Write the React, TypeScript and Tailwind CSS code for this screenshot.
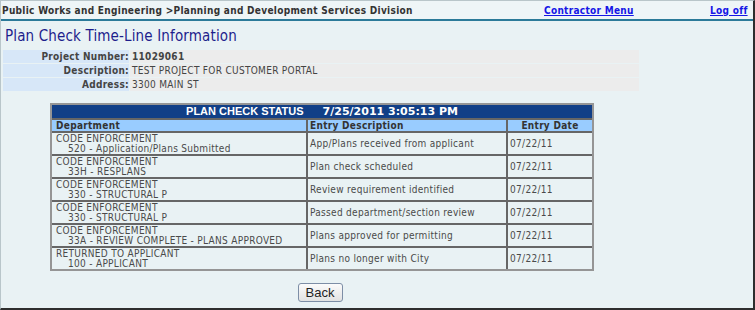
import React from 'react';

const rows = [
  { dept: 'CODE ENFORCEMENT', sub: '520 - Application/Plans Submitted', desc: 'App/Plans received from applicant', date: '07/22/11' },
  { dept: 'CODE ENFORCEMENT', sub: '33H - RESPLANS', desc: 'Plan check scheduled', date: '07/22/11' },
  { dept: 'CODE ENFORCEMENT', sub: '330 - STRUCTURAL P', desc: 'Review requirement identified', date: '07/22/11' },
  { dept: 'CODE ENFORCEMENT', sub: '330 - STRUCTURAL P', desc: 'Passed department/section review', date: '07/22/11' },
  { dept: 'CODE ENFORCEMENT', sub: '33A - REVIEW COMPLETE - PLANS APPROVED', desc: 'Plans approved for permitting', date: '07/22/11' },
  { dept: 'RETURNED TO APPLICANT', sub: '100 - APPLICANT', desc: 'Plans no longer with City', date: '07/22/11' },
];

const info = [
  { label: 'Project Number:', value: '11029061', bold: true },
  { label: 'Description:', value: 'TEST PROJECT FOR CUSTOMER PORTAL', bold: false },
  { label: 'Address:', value: '3300 MAIN ST', bold: false },
];

export default function App() {
  return (
    <div className="w-[755px] h-[310px] overflow-hidden bg-[#e9f2f4] border-t border-l border-[#b9c6ca] border-r-2 border-b-2 border-r-[#2e2e2e] border-b-[#2e2e2e] font-['DejaVu_Sans_Condensed','DejaVu_Sans',sans-serif] font-stretch-condensed text-[10px] tracking-[0.3px] text-[#4a4a4a]">
      {/* Top bar */}
      <div className="flex h-[20px] items-center border-b-2 border-[#2b7a99] bg-[#eef5f7] font-bold text-[#333]">
        <div className="w-[543px] pl-[1px] whitespace-nowrap">
          Public Works and Engineering &gt;Planning and Development Services Division
        </div>
        <a href="#" className="w-[166px] text-[#1515e6] underline">Contractor Menu</a>
        <a href="#" className="text-[#1515e6] underline">Log off</a>
      </div>

      {/* Title */}
      <h1 className="pt-[6px] pl-[4px] h-[24px] text-[15px] leading-[18px] tracking-[0.15px] text-[#1e1e8c]">
        Plan Check Time-Line Information
      </h1>

      {/* Project info */}
      <div className="mt-[5px] ml-[2px] grid grid-cols-[126px_509px] gap-px">
        {info.map(i => (
          <React.Fragment key={i.label}>
            <div className="h-[13px] leading-[13px] bg-[#d7e7f8] text-right font-bold text-[#444]">{i.label}</div>
            <div className={`h-[13px] leading-[13px] bg-[#ececec] pl-[2px] text-[#444] ${i.bold ? 'font-bold' : ''}`}>{i.value}</div>
          </React.Fragment>
        ))}
      </div>

      {/* Status table */}
      <div className="mt-[12px] ml-[49px] w-[544px] border-2 border-[#959595] bg-[#666]">
        <div className="grid grid-cols-[254px_198px_84px] gap-[2px]">
          <div className="col-span-3 flex h-[13px] items-center justify-center gap-[19px] bg-[#113f87] text-[11px] font-bold leading-[13px] tracking-normal text-white">
            <span className="font-['Liberation_Sans',Arial,sans-serif]">PLAN CHECK STATUS</span>
            <span className="font-['DejaVu_Sans',sans-serif] font-stretch-normal">7/25/2011 3:05:13 PM</span>
          </div>
          <div className="h-[11px] bg-[#99ccff] pl-[4px] font-bold leading-[11px] text-[#333]">Department</div>
          <div className="h-[11px] bg-[#99ccff] pl-[2px] font-bold leading-[11px] text-[#333]">Entry Description</div>
          <div className="h-[11px] bg-[#99ccff] text-center font-bold leading-[11px] text-[#333]">Entry Date</div>
          {rows.map((r, idx) => (
            <React.Fragment key={idx}>
              <div className="flex h-[21px] flex-col justify-center bg-[#e9f2f4] pl-[4px] leading-[10px]">
                <span>{r.dept}</span>
                <span className="pl-[12px]">{r.sub}</span>
              </div>
              <div className="flex h-[21px] items-center bg-[#e9f2f4] pl-[2px]">{r.desc}</div>
              <div className="flex h-[21px] items-center bg-[#e9f2f4] pl-[2px]">{r.date}</div>
            </React.Fragment>
          ))}
        </div>
      </div>

      {/* Back button */}
      <div className="mt-[12px] ml-[47px] flex w-[544px] justify-center">
        <button className="h-[19px] w-[45px] rounded-[3px] border border-[#7d8ea6] bg-gradient-to-b from-[#fbfbfb] to-[#e2e2e2] font-['Liberation_Sans',Arial,sans-serif] text-[13px] leading-[15px] tracking-normal text-[#222]">
          Back
        </button>
      </div>
    </div>
  );
}
